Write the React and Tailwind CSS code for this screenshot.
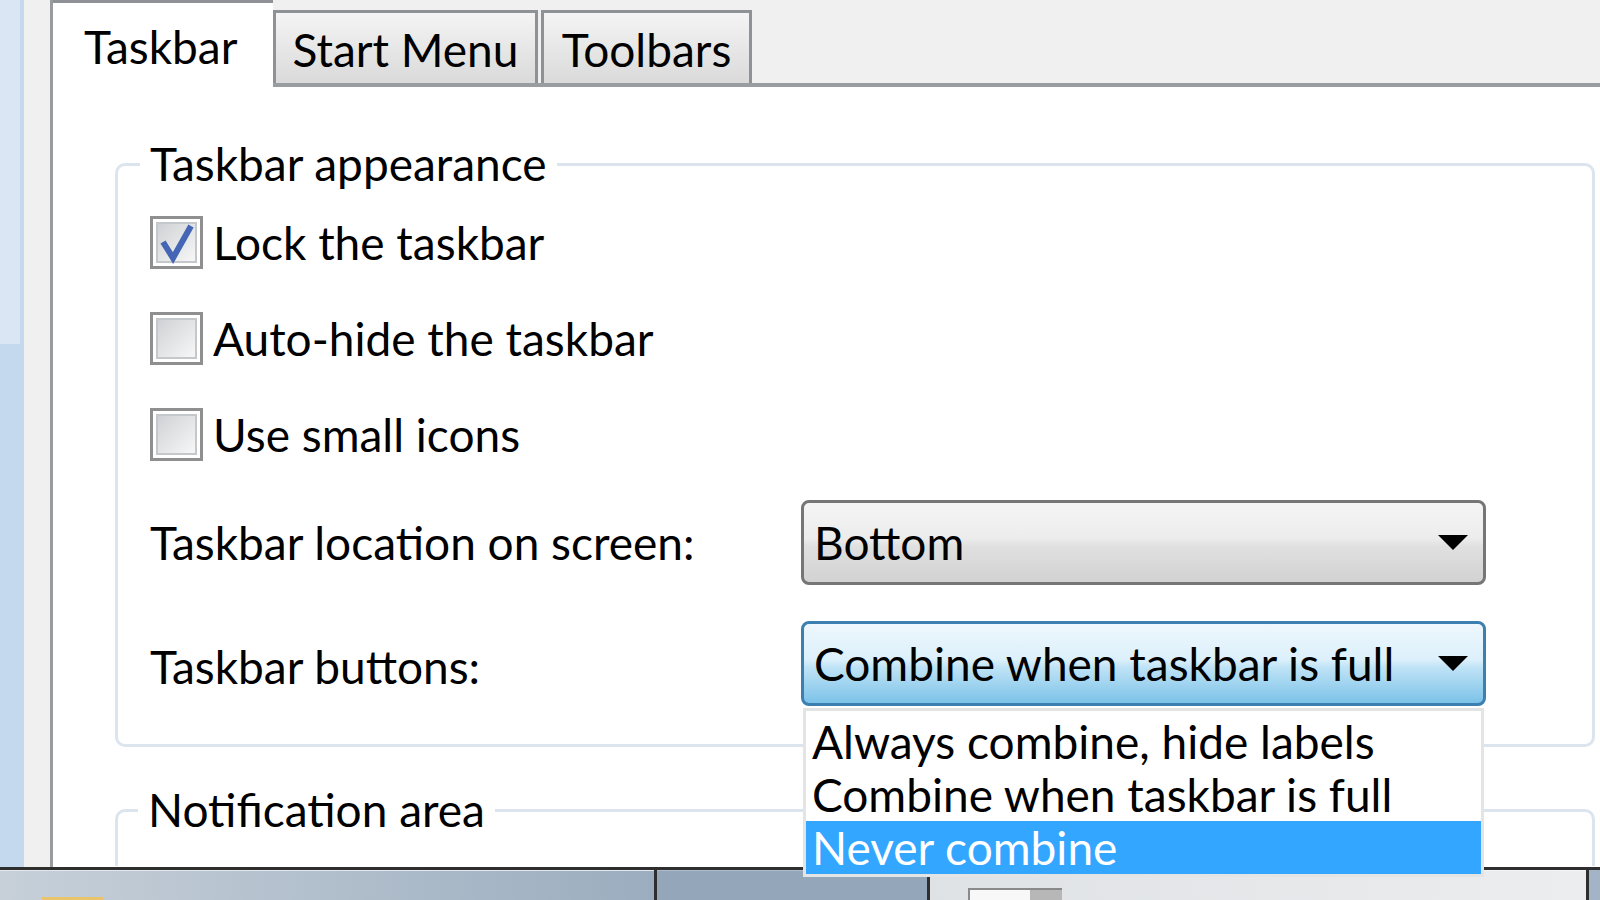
import React from 'react'

const Checkbox = ({ checked }) => (
    <div className="relative w-[53px] h-[53px] shrink-0 border-[3px] border-[#8f8f8f] bg-white p-[3px]">
        <div className="w-full h-full border-[2px] border-[#c5c8cb] bg-[linear-gradient(135deg,#cfd2d5,#f7f7f7)]" />
        {checked && (
            <svg className="absolute left-0 top-0" width="47" height="47" viewBox="0 0 47 47">
                <path d="M10 23 L20 39 L38 7" fill="none" stroke="#4566b4" strokeWidth="6" strokeLinejoin="miter" />
            </svg>
        )}
    </div>
)

const Arrow = () => (
    <svg width="30" height="15" viewBox="0 0 30 15" className="shrink-0">
        <polygon points="0,0 30,0 15,15" fill="#000" />
    </svg>
)

const Combo = ({ value, active }) => (
    <div
        className={
            active
                ? 'h-[85px] w-[685px] shrink-0 flex items-center justify-between pl-[10px] pr-[15px] rounded-[8px] border-[3px] border-[#3c7fb1] bg-[linear-gradient(to_bottom,#eef7fd_0%,#dcf0fb_45%,#bfe3f6_55%,#7cc2e8_100%)]'
                : 'h-[85px] w-[685px] shrink-0 flex items-center justify-between pl-[10px] pr-[15px] rounded-[8px] border-[3px] border-[#767676] bg-[linear-gradient(to_bottom,#f5f5f5_0%,#ececec_45%,#e0e0e0_55%,#d2d2d2_100%)]'
        }
    >
        <span>{value}</span>
        <Arrow />
    </div>
)

const listItems = ['Always combine, hide labels', 'Combine when taskbar is full', 'Never combine']

export default function App() {
    return (
        <div className="relative w-[1600px] h-[900px] overflow-hidden flex flex-col bg-white text-black text-[46px] leading-none font-['Lato','Noto_Sans',sans-serif]">
            <div className="flex flex-1 min-h-0">
                {/* desktop edge + window frame */}
                <div className="w-[24px] flex flex-col bg-[#c4d8ee]">
                    <div className="w-[20px] h-[344px] bg-[#dae6f4]" />
                </div>
                <div className="w-[26px] bg-[#f0f0f0]" />

                <div className="flex-1 flex flex-col border-l-[3px] border-[#999c9f]">
                    {/* tabs */}
                    <div className="h-[87px] flex shrink-0">
                        <div className="w-[220px] h-full bg-white border-t-[3px] border-[#8e9297] pl-[31px] pt-[21px]">
                            Taskbar
                        </div>
                        <div className="flex-1 h-full bg-[#f0f0f0] flex items-end border-b-[4px] border-[#9a9da0]">
                            <div className="w-[265px] h-[73px] pt-[4px] flex items-center justify-center border-l-[3px] border-r-[3px] border-t-[3px] border-[#8e9297] bg-[linear-gradient(to_bottom,#f4f4f4,#dadada)]">
                                Start Menu
                            </div>
                            <div className="ml-[3px] w-[211px] h-[73px] pt-[4px] flex items-center justify-center border-l-[3px] border-r-[3px] border-t-[3px] border-[#8e9297] bg-[linear-gradient(to_bottom,#f4f4f4,#dadada)]">
                                Toolbars
                            </div>
                        </div>
                    </div>

                    {/* page body */}
                    <div className="flex-1 min-h-0 bg-white pl-[62px] pr-[5px] pt-[54px]">
                        <fieldset className="border-[3px] border-[#dce5ee] rounded-[10px] pl-[32px] pb-[38px]">
                            <legend className="-ml-[10px] px-[10px] h-[46px] leading-[46px]">Taskbar appearance</legend>
                            <div className="mt-[29px] flex flex-col gap-[43px]">
                                <div className="h-[53px] flex items-center gap-[10px]">
                                    <Checkbox checked />
                                    <span>Lock the taskbar</span>
                                </div>
                                <div className="h-[53px] flex items-center gap-[10px]">
                                    <Checkbox />
                                    <span>Auto-hide the taskbar</span>
                                </div>
                                <div className="h-[53px] flex items-center gap-[10px]">
                                    <Checkbox />
                                    <span>Use small icons</span>
                                </div>
                            </div>
                            <div className="mt-[39px] flex items-center">
                                <span className="w-[651px]">Taskbar location on screen:</span>
                                <Combo value="Bottom" />
                            </div>
                            <div className="mt-[36px] flex items-center">
                                <span className="w-[651px] mt-[6px]">Taskbar buttons:</span>
                                <div className="relative">
                                    <Combo value="Combine when taskbar is full" active />
                                    {/* open drop-down list, drawn over the taskbar */}
                                    <div className="absolute left-[2px] right-[2px] top-[87px] z-20 bg-white border-[3px] border-[#e4e4e4] pt-[4px]">
                                        {listItems.map((item, i) => (
                                            <div
                                                key={item}
                                                className={
                                                    i === 2
                                                        ? 'h-[53px] pl-[6px] flex items-center bg-[#33a6ff] text-white'
                                                        : 'h-[53px] pl-[6px] flex items-center'
                                                }
                                            >
                                                {item}
                                            </div>
                                        ))}
                                    </div>
                                </div>
                            </div>
                        </fieldset>

                        <fieldset className="mt-[40px] h-[79px] border-[3px] border-b-0 border-[#dce5ee] rounded-t-[10px] pl-[32px]">
                            <legend className="-ml-[12px] px-[10px] h-[46px] leading-[46px]">Notification area</legend>
                        </fieldset>
                    </div>
                </div>
            </div>

            {/* taskbar */}
            <div className="h-[33px] shrink-0 flex flex-col bg-[#2e2e2e]">
                <div className="h-[3px] bg-[#2e2e2e]" />
                <div className="flex-1 flex">
                    <div className="w-[654px] flex items-end pl-[42px] border-t border-[#e2e8ee] bg-[linear-gradient(90deg,#c7d0d9,#9badbf)]">
                        <div className="w-[61px] h-[3px] bg-[#e9c46a]" />
                    </div>
                    <div className="w-[3px] bg-[#2f2f2f]" />
                    <div className="w-[270px] bg-[#93a6ba] border-t border-[#aebccb]" />
                    <div className="w-[3px] bg-[#2f2f2f]" />
                    <div className="w-[656px] flex items-end pl-[38px] border-t border-[#f4f5f6] bg-[linear-gradient(90deg,#dfe2e5,#ecedef)]">
                        <div className="w-[94px] h-[12px] flex border-t-[2px] border-l-[2px] border-[#8a8a8a]">
                            <div className="w-[60px] bg-[#f8f8f8]" />
                            <div className="flex-1 bg-[#b7b7b7]" />
                        </div>
                    </div>
                    <div className="w-[3px] bg-[#2f2f2f]" />
                    <div className="flex-1 bg-[#a3b4c6]" />
                </div>
            </div>
        </div>
    )
}
